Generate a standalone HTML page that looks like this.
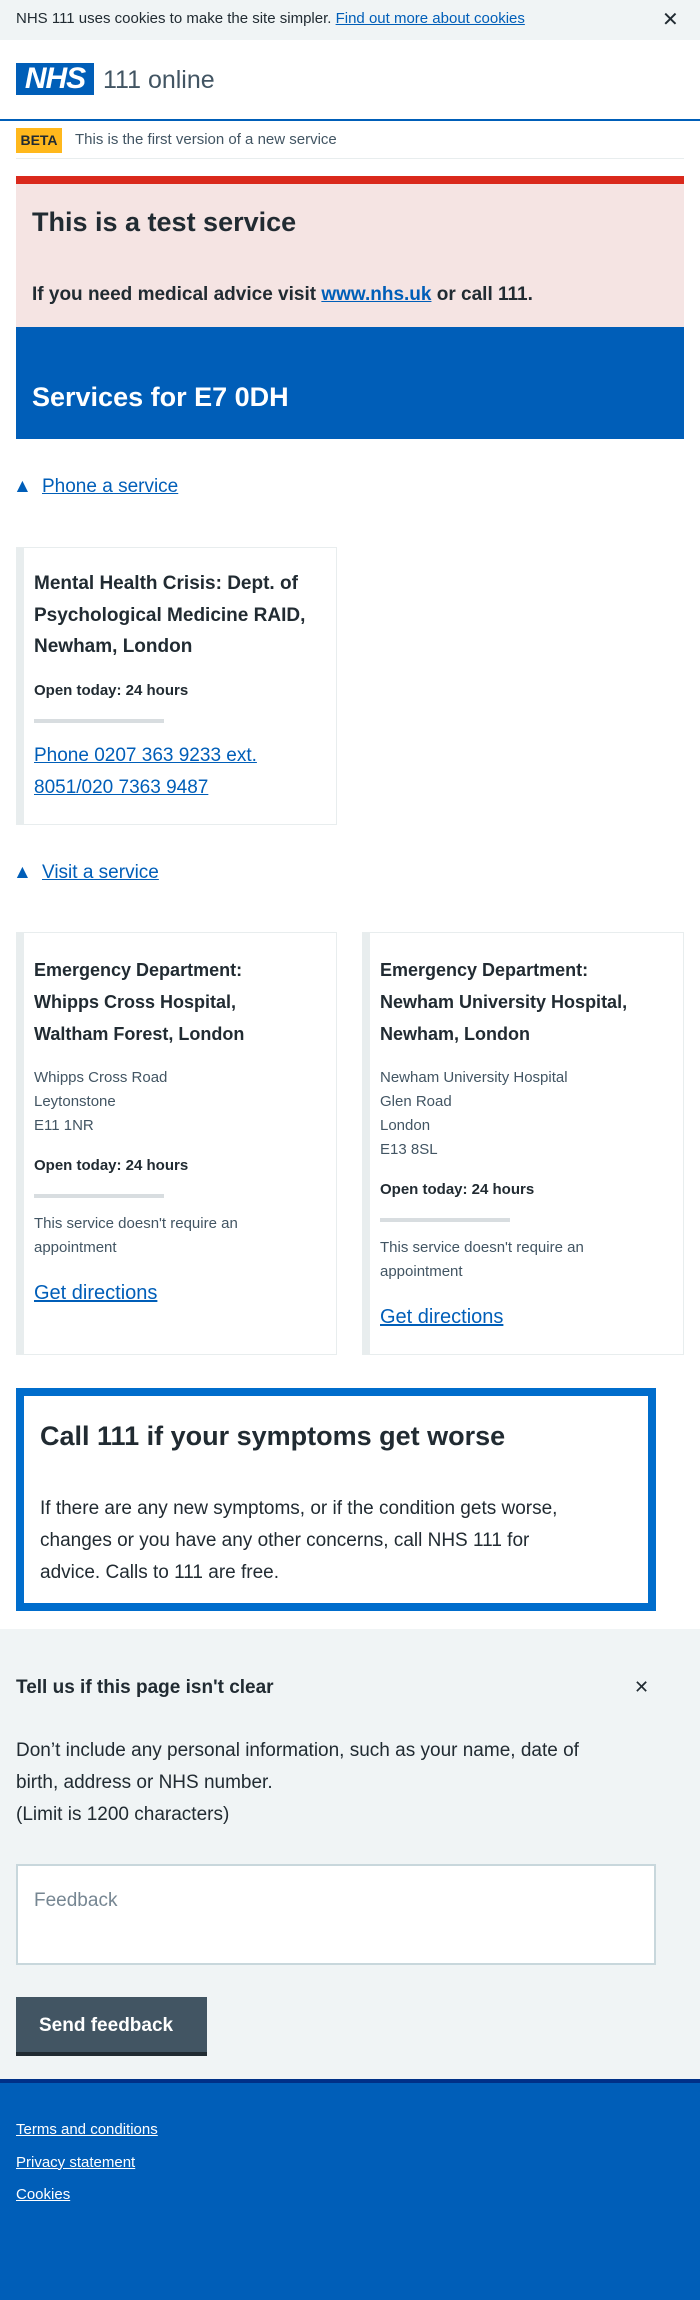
<!DOCTYPE html>
<html><head><meta charset="utf-8"><style>
*{margin:0;padding:0;box-sizing:border-box}
body{width:700px;height:2300px;font-family:"Liberation Sans",Arial,sans-serif;color:#212b32;background:#fff;position:relative;overflow:hidden}
.a{position:absolute}
a{color:#005eb8;text-decoration:underline}
</style></head><body>
<div class="a" style="left:0;top:0;width:700px;height:40px;background:#f0f4f5"></div>
<div class="a" style="left:16px;top:10px;font-size:15px;white-space:nowrap">NHS 111 uses cookies to make the site simpler. <a href="#">Find out more about cookies</a></div>
<div class="a" style="left:662px;top:7px;font-size:20px;color:#212b32">✕</div>

<div class="a" style="left:16px;top:63px;width:78px;height:32px;background:#005eb8;color:#fff;font-weight:bold;font-style:italic;font-size:30px;line-height:32px;text-align:center;letter-spacing:-1px">NHS</div>
<div class="a" style="left:103px;top:66px;font-size:25px;color:#425563">111 online</div>
<div class="a" style="left:0;top:119px;width:700px;height:2px;background:#005eb8"></div>

<div class="a" style="left:16px;top:128px;width:46px;height:25px;background:#ffb81c;font-weight:bold;font-size:14px;line-height:25px;text-align:center">BETA</div>
<div class="a" style="left:75px;top:131px;font-size:15px;color:#425563">This is the first version of a new service</div>
<div class="a" style="left:16px;top:158px;width:668px;height:1px;background:#e8edee"></div>

<div class="a" style="left:16px;top:176px;width:668px;height:8px;background:#da291c"></div>
<div class="a" style="left:16px;top:184px;width:668px;height:143px;background:#f5e4e3"></div>
<div class="a" style="left:32px;top:207px;font-size:27px;font-weight:bold">This is a test service</div>
<div class="a" style="left:32px;top:284px;font-size:19px;font-weight:bold">If you need medical advice visit <a href="#">www.nhs.uk</a> or call 111.</div>
<div class="a" style="left:16px;top:327px;width:668px;height:112px;background:#005eb8"></div>
<div class="a" style="left:32px;top:382px;font-size:27px;font-weight:bold;color:#fff">Services for E7 0DH</div>

<div class="a" style="left:13px;top:476px;font-size:19px;color:#005eb8">▲</div>
<div class="a" style="left:42px;top:476px;font-size:19px"><a href="#">Phone a service</a></div>

<div class="a" style="left:16px;top:547px;width:321px;height:278px;border:1px solid #e8edee;border-left:8px solid #e8edee"></div>
<div class="a" style="left:34px;top:568px;width:300px;font-size:19px;font-weight:bold;line-height:31.5px">Mental Health Crisis: Dept. of<br>Psychological Medicine RAID,<br>Newham, London</div>
<div class="a" style="left:34px;top:682px;font-size:15px;font-weight:bold">Open today: 24 hours</div>
<div class="a" style="left:34px;top:719px;width:130px;height:4px;background:#d8dde0"></div>
<div class="a" style="left:34px;top:740px;width:300px;font-size:19px;line-height:32px"><a href="#">Phone 0207 363 9233 ext.<br>8051/020 7363 9487</a></div>

<div class="a" style="left:13px;top:862px;font-size:19px;color:#005eb8">▲</div>
<div class="a" style="left:42px;top:862px;font-size:19px"><a href="#">Visit a service</a></div>

<div class="a" style="left:16px;top:932px;width:321px;height:423px;border:1px solid #e8edee;border-left:8px solid #e8edee"></div>
<div class="a" style="left:362px;top:932px;width:322px;height:423px;border:1px solid #e8edee;border-left:8px solid #e8edee"></div>

<div class="a" style="left:34px;top:954px;width:300px;font-size:18px;font-weight:bold;line-height:32px">Emergency Department:<br>Whipps Cross Hospital,<br>Waltham Forest, London</div>
<div class="a" style="left:34px;top:1066px;font-size:15px;line-height:24px;color:#425563">Whipps Cross Road<br>Leytonstone<br>E11 1NR</div>
<div class="a" style="left:34px;top:1157px;font-size:15px;font-weight:bold">Open today: 24 hours</div>
<div class="a" style="left:34px;top:1194px;width:130px;height:4px;background:#d8dde0"></div>
<div class="a" style="left:34px;top:1212px;font-size:15px;line-height:24px;color:#425563">This service doesn't require an<br>appointment</div>
<div class="a" style="left:34px;top:1282px;font-size:20px"><a href="#">Get directions</a></div>

<div class="a" style="left:380px;top:954px;width:300px;font-size:18px;font-weight:bold;line-height:32px">Emergency Department:<br>Newham University Hospital,<br>Newham, London</div>
<div class="a" style="left:380px;top:1066px;font-size:15px;line-height:24px;color:#425563">Newham University Hospital<br>Glen Road<br>London<br>E13 8SL</div>
<div class="a" style="left:380px;top:1181px;font-size:15px;font-weight:bold">Open today: 24 hours</div>
<div class="a" style="left:380px;top:1218px;width:130px;height:4px;background:#d8dde0"></div>
<div class="a" style="left:380px;top:1236px;font-size:15px;line-height:24px;color:#425563">This service doesn't require an<br>appointment</div>
<div class="a" style="left:380px;top:1306px;font-size:20px"><a href="#">Get directions</a></div>

<div class="a" style="left:16px;top:1388px;width:640px;height:223px;border:8px solid #006dcc"></div>
<div class="a" style="left:40px;top:1421px;font-size:27px;font-weight:bold">Call 111 if your symptoms get worse</div>
<div class="a" style="left:40px;top:1493px;width:610px;font-size:19px;line-height:32px">If there are any new symptoms, or if the condition gets worse,<br>changes or you have any other concerns, call NHS 111 for<br>advice. Calls to 111 are free.</div>

<div class="a" style="left:0;top:1629px;width:700px;height:450px;background:#f0f4f5"></div>
<div class="a" style="left:16px;top:1677px;font-size:19px;font-weight:bold">Tell us if this page isn't clear</div>
<div class="a" style="left:634px;top:1677px;font-size:18px">✕</div>
<div class="a" style="left:16px;top:1735px;width:680px;font-size:19px;line-height:32px">Don’t include any personal information, such as your name, date of<br>birth, address or NHS number.<br>(Limit is 1200 characters)</div>
<div class="a" style="left:16px;top:1864px;width:640px;height:101px;background:#fff;border:2px solid #c8d7dc"></div>
<div class="a" style="left:34px;top:1890px;font-size:19px;color:#768692">Feedback</div>
<div class="a" style="left:16px;top:1997px;width:191px;height:59px;background:#425563;border-bottom:4px solid #212b32"></div>
<div class="a" style="left:39px;top:2015px;font-size:19px;font-weight:bold;color:#fff">Send feedback</div>

<div class="a" style="left:0;top:2079px;width:700px;height:221px;background:#005eb8;border-top:4px solid #003087"></div>
<div class="a" style="left:16px;top:2114px;font-size:15px;line-height:32.5px"><a href="#" style="color:#fff">Terms and conditions</a><br><a href="#" style="color:#fff">Privacy statement</a><br><a href="#" style="color:#fff">Cookies</a></div>
</body></html>
